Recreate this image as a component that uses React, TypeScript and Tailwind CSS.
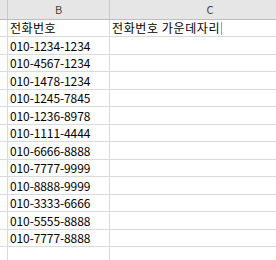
import React from 'react';

const rows = [
    '전화번호',
    '010-1234-1234',
    '010-4567-1234',
    '010-1478-1234',
    '010-1245-7845',
    '010-1236-8978',
    '010-1111-4444',
    '010-6666-8888',
    '010-7777-9999',
    '010-8888-9999',
    '010-3333-6666',
    '010-5555-8888',
    '010-7777-8888',
    '',
];

const App: React.FC = () => {
    return (
        <div
            className="w-[276px] h-[260px] overflow-hidden bg-white text-black"
            style={{ fontFamily: '"Noto Sans CJK KR", "Noto Sans", sans-serif' }}
        >
            {/* column headers */}
            <div className="flex h-[20px] bg-[#e6e6e6] border-b border-[#bdbdbd] text-[11px] text-[#444]">
                <div className="w-[8px] shrink-0 border-r border-[#c9c9c9]"></div>
                <div className="w-[102px] shrink-0 border-r border-[#c9c9c9] flex items-center justify-center">B</div>
                <div className="w-[200px] shrink-0 flex items-center justify-center">C</div>
            </div>

            {rows.map((r, i) => (
                <div
                    key={i}
                    className={`flex border-b border-[#dadada] text-[12px] ${i % 2 === 0 ? 'h-[17px]' : 'h-[18px]'}`}
                >
                    <div className="w-[8px] shrink-0 border-r border-[#dadada]"></div>
                    <div className={`w-[102px] shrink-0 border-r border-[#dadada] flex items-end pl-[2px] leading-[16px] ${i === 0 ? 'tracking-[0.5px]' : 'tracking-[-0.1px]'}`}>
                        {r}
                    </div>
                    <div className="w-[200px] shrink-0 flex items-end pl-[2px] leading-[16px]">
                        {i === 0 && (
                            <>
                                <span className="tracking-[0.6px]">전화번호 가운데자리</span>
                                <span className="ml-[1px] mb-[1px] w-[1px] h-[13px] bg-[#6aaef0]"></span>
                            </>
                        )}
                    </div>
                </div>
            ))}
        </div>
    );
};

export default App;
